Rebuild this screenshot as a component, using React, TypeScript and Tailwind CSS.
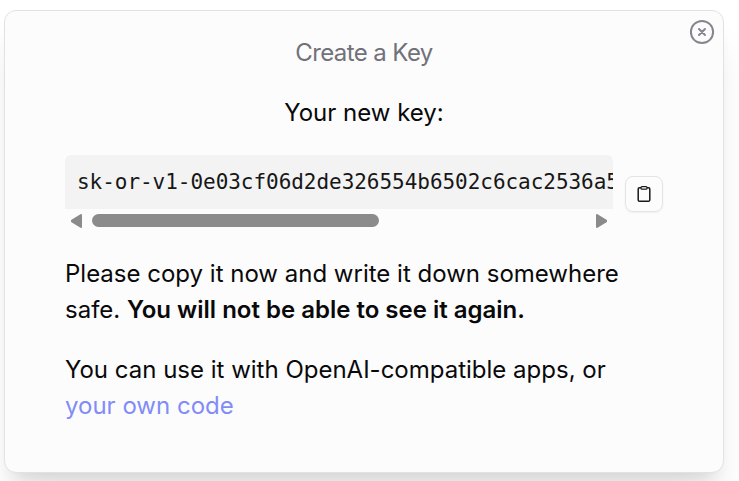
export default function App() {
  return (
    <div className="h-[481px] w-[739px] overflow-hidden bg-white pl-1 pt-[10px] font-['Inter',sans-serif] text-[#09090b]">
      <main className="relative flex h-[463px] w-[720px] flex-col rounded-[12px] border border-[#e2e2e4] bg-[#fcfcfc] px-[60px] pt-6 text-2xl leading-9 shadow-[0_30px_38px_-8px_rgba(0,0,0,0.1),0_12px_15px_-9px_rgba(0,0,0,0.1)]">
        <button aria-label="Close" className="absolute right-[8px] top-[8px]">
          <svg width="26" height="26" viewBox="0 0 26 26" fill="none" stroke="#858592" strokeWidth="2" strokeLinecap="round">
            <circle cx="13" cy="13" r="11.1" /><path d="m10 10 6 6m0-6-6 6" />
          </svg>
        </button>
        <h1 className="text-center tracking-[-0.6px] text-[#71717a]">Create a Key</h1>
        <p className="mt-6 text-center">Your new key:</p>
        <div className="mt-6 flex gap-3">
          <div className="w-[548px]">
            <div className="h-[54px] overflow-hidden whitespace-nowrap rounded-t-md bg-[#f3f3f3] px-3 py-[9px] font-['DejaVu_Sans_Mono',monospace] text-[21px] tracking-[-0.04px] text-[#171717]">sk-or-v1-0e03cf06d2de326554b6502c6cac2536a5</div>
            <div className="flex h-[23px] items-center pl-[6px] pr-[6px]">
              <svg width="11" height="14" fill="#8b8b8b" stroke="#8b8b8b" strokeWidth="2" strokeLinejoin="round"><path d="M10 1v12L1 7.5v-1z" /></svg>
              <div className="ml-[10px] h-[13px] w-[287px] rounded-full bg-[#8b8b8b]" />
              <svg className="ml-auto" width="11" height="14" fill="#8b8b8b" stroke="#8b8b8b" strokeWidth="2" strokeLinejoin="round"><path d="M1 1v12l9-5.5v-1z" /></svg>
            </div>
          </div>
          <button aria-label="Copy" className="mt-[21px] flex h-9 w-[38px] items-center justify-center rounded-lg border border-[#e4e4e7] shadow-xs">
            <svg width="14" height="18" viewBox="0 0 14 18" fill="none" stroke="#18181b" strokeWidth="1.5" strokeLinejoin="round"><rect x="1.2" y="2.7" width="11.6" height="13.6" rx="1.4" /><rect x="4" y="1.5" width="6" height="2.8" rx="1" fill="#c8c8c8" strokeWidth="1.1" /></svg>
          </button>
        </div>
        <p className="mt-6">Please copy it now and write it down somewhere<br />safe. <strong className="font-semibold">You will not be able to see it again.</strong></p>
        <p className="mt-6">You can use it with OpenAI-compatible apps, or<br /><a className="text-[#818cf8]">your own code</a></p>
      </main>
    </div>
  );
}
